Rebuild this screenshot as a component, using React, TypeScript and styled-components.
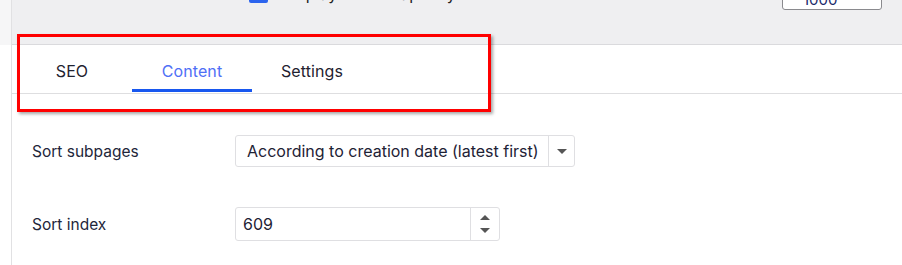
import React from "react";
import styled, { createGlobalStyle } from "styled-components";

const Global = createGlobalStyle`
  html, body { margin: 0; padding: 0; background: #ffffff; }
  body { font-family: Inter, Roboto, "Noto Sans", Arial, sans-serif; overflow: hidden; }
  * { box-sizing: border-box; }
`;

const Page = styled.div`
  position: relative;
  display: flex;
  width: 902px;
  height: 265px;
  overflow: hidden;
  background: #fff;
`;

const Gutter = styled.div`
  width: 12px;
  flex: none;
  background: linear-gradient(#f6f6f7 0, #f6f6f7 45px, #fff 45px);
  border-right: 1px solid #e1e1e3;
`;

const Main = styled.div`
  flex: 1;
  display: flex;
  flex-direction: column;
`;

const TopBar = styled.div`
  height: 45px;
  flex: none;
  background: #efeff1;
  border-bottom: 1px solid #dadadd;
  display: flex;
  align-items: flex-start;
  overflow: hidden;
`;

const CheckRow = styled.div`
  margin-left: 237px;
  margin-top: -16px;
  display: flex;
  align-items: center;
  gap: 14px;
  font-size: 16px;
  color: #222;
`;

const CheckBox = styled.span`
  width: 19px;
  height: 18px;
  border-radius: 2px;
  background: #2c64ee;
`;

const TopInput = styled.div`
  margin-left: auto;
  margin-right: 20px;
  margin-top: -24px;
  width: 100px;
  height: 34px;
  border: 1px solid #8a8a8e;
  border-radius: 3px;
  background: #fff;
  font-size: 15px;
  color: #1b2a6b;
  padding: 13px 0 0 20px;
`;

const TabBar = styled.div`
  height: 49px;
  flex: none;
  display: flex;
  border-bottom: 1px solid #dedee0;
`;

const Tab = styled.div<{ $active?: boolean }>`
  width: 120px;
  height: 47px;
  display: flex;
  align-items: center;
  justify-content: center;
  padding-top: 8px;
  font-size: 16px;
  letter-spacing: 0.1px;
  color: ${(p) => (p.$active ? "#4f6ff6" : "#1f2230")};
  border-bottom: 3px solid ${(p) => (p.$active ? "#1857ef" : "transparent")};
`;

const Form = styled.div`
  padding: 41px 0 0 20px;
  display: flex;
  flex-direction: column;
  gap: 40px;
`;

const Row = styled.div`
  display: flex;
  align-items: center;
`;

const Label = styled.div`
  width: 203px;
  font-size: 15.5px;
  color: #23263a;
  padding-top: 1px;
`;

const Field = styled.div<{ $w: number; $h: number }>`
  width: ${(p) => p.$w}px;
  height: ${(p) => p.$h}px;
  display: flex;
  border: 1px solid #dfdfe2;
  border-radius: 3px;
  background: #fff;
`;

const Value = styled.div<{ $pad: number }>`
  flex: 1;
  display: flex;
  align-items: center;
  padding-left: ${(p) => p.$pad}px;
  font-size: 16px;
  color: #1e2235;
  white-space: nowrap;
`;

const Addon = styled.div<{ $w: number }>`
  width: ${(p) => p.$w}px;
  border-left: 1px solid #dfdfe2;
  display: flex;
  flex-direction: column;
  align-items: center;
  justify-content: center;
  gap: 8px;
`;

const Tri = styled.span<{ $up?: boolean }>`
  width: 0;
  height: 0;
  border-left: 5px solid transparent;
  border-right: 5px solid transparent;
  ${(p) =>
    p.$up
      ? "border-bottom: 5px solid #555;"
      : "border-top: 5px solid #555;"}
`;

const Highlight = styled.div`
  position: absolute;
  left: 17px;
  top: 34px;
  width: 474px;
  height: 78px;
  border: 3px solid #ff0000;
  box-shadow: 2px 2px 3px rgba(0, 0, 0, 0.35);
  pointer-events: none;
`;

export default function App() {
  return (
    <>
      <Global />
      <Page>
        <Gutter />
        <Main>
          <TopBar>
            <CheckRow>
              <CheckBox />
              <span>Display in sitemap only</span>
            </CheckRow>
            <TopInput>1000</TopInput>
          </TopBar>
          <TabBar>
            <Tab>SEO</Tab>
            <Tab $active>Content</Tab>
            <Tab>Settings</Tab>
          </TabBar>
          <Form>
            <Row>
              <Label>Sort subpages</Label>
              <Field $w={340} $h={32}>
                <Value $pad={11}>According to creation date (latest first)</Value>
                <Addon $w={26}>
                  <Tri />
                </Addon>
              </Field>
            </Row>
            <Row>
              <Label>Sort index</Label>
              <Field $w={265} $h={34}>
                <Value $pad={7}>609</Value>
                <Addon $w={29}>
                  <Tri $up />
                  <Tri />
                </Addon>
              </Field>
            </Row>
          </Form>
        </Main>
        <Highlight />
      </Page>
    </>
  );
}
